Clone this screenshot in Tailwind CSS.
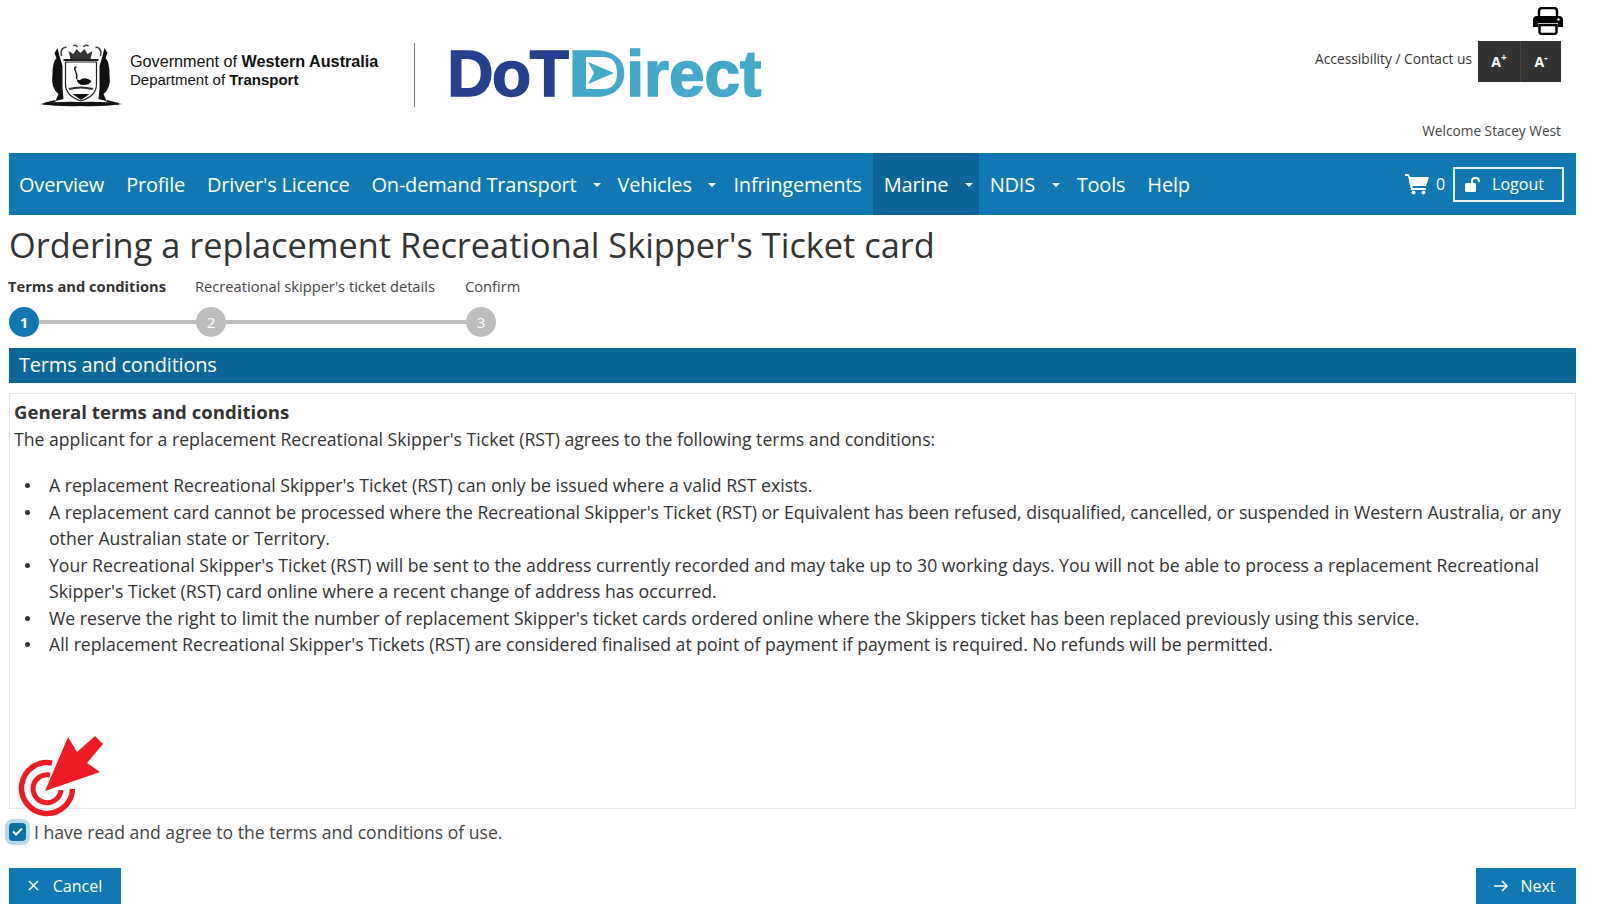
<!DOCTYPE html>
<html lang="en">
<head>
  <meta charset="UTF-8" />
  <meta name="viewport" content="width=device-width, initial-scale=1.0"/>
  <title>DoT Direct - Ordering a replacement card</title>
  <script src="https://cdn.jsdelivr.net/npm/@tailwindcss/browser@4"></script>
</head>
<body class="bg-white font-['Open_Sans',sans-serif] text-[#333] overflow-hidden">
  <div class="relative w-[1585px] h-[921px] px-[9px]">

    <!-- header -->
    <header class="h-[153px] flex justify-between">
      <div class="flex items-start pt-[43px]">
        <!-- WA crest -->
        <svg class="ml-[30px] mt-[1px] w-[84px] h-[63px]" viewBox="0 0 83 63">
          <path d="M0 60 Q20 57 41 58 Q62 57 83 60 Q62 63 41 62 Q20 63 0 60Z" fill="#111"/>
          <path d="M31 15 L29 7 L34 10 L37 5 L41 9 L45 5 L48 10 L53 7 L51 15 Z" fill="#333"/>
          <path d="M27 3 Q20 4 22 12 M56 3 Q63 4 61 12 M34 2 Q36 0 38 3 M44 3 Q46 0 49 2" fill="none" stroke="#444" stroke-width="1.600"/>
          <path d="M26 18 H57 V40 Q57 52 41.500 57 Q26 52 26 40 Z" fill="#fff" stroke="#222" stroke-width="1.200"/>
          <path d="M24 16 H59" stroke="#222" stroke-width="2"/>
          <path d="M37 23 Q34 23 36 27 Q38 31 37 35" fill="none" stroke="#111" stroke-width="1.500"/>
          <path d="M37 35 Q38 41 44 41 Q50 41 52 37 Q47 33 42 35 Q40 37 37 35Z" fill="#111"/>
          <path d="M29 44 Q41 41 54 44 L53 46 Q41 43 30 46 Z" fill="#333"/>
          <path d="M33 50 H50 L41.500 56 Z" fill="#111"/>
          <path d="M15 9 L18 4 L20 12 L23 22 L23 44 L24 55 L16 57 L19 50 Q11 44 13 30 Q13 18 17 14 Z" fill="#111"/>
          <path d="M68 9 L65 4 L63 12 L60 22 L60 44 L59 55 L67 57 L64 50 Q72 44 70 30 Q70 18 66 14 Z" fill="#111"/>
          <path d="M16 57 Q8 59 4 60 M67 57 Q75 59 79 60" stroke="#111" stroke-width="2"/>
        </svg>
        <div class="ml-[7px] mt-[10px] font-['Liberation_Sans',sans-serif] leading-[17.500px] text-[#111]">
          <div class="text-[16.200px]">Government of <b>Western Australia</b></div>
          <div class="text-[15px]">Department of <b>Transport</b></div>
        </div>
        <div class="ml-[36px] w-px h-[64px] bg-[#777]"></div>
        <!-- DoT Direct logo -->
        <div class="ml-[32px] mt-[-1px] flex items-center h-[64px] font-['Liberation_Sans',sans-serif] font-bold text-[64px] leading-none">
          <span class="text-[#24408e] tracking-[-1.500px] [-webkit-text-stroke:1.500px_#24408e]">DoT</span>
          <span class="text-[#44a8cb] ml-[1px] tracking-[0px] [-webkit-text-stroke:1.500px_#44a8cb] flex">
            <span class="relative inline-block w-[58px]">
              <span class="inline-block origin-left scale-x-[1.27]">D</span>
              <svg class="absolute left-[18px] top-[15px] w-[34px] h-[32px]" viewBox="0 0 34 32">
                <path d="M0 0 H17 Q31 0 31 16 Q31 32 17 32 H0 Z" fill="#fff"/>
                <path d="M2 5 L28 16 L2 27 L8 16 Z" fill="#44a8cb"/>
              </svg>
            </span>
            <span>irect</span>
          </span>
        </div>
      </div>
      <div class="flex flex-col items-end pr-[15px]">
        <svg class="mt-[7px] mr-[-2px] w-[30px] h-[28px]" viewBox="0 0 30 28">
          <path d="M6 10 V4 Q6 1 9 1 H21 Q24 1 24 4 V10" fill="none" stroke="#000" stroke-width="2.500"/>
          <path d="M4 9 H26 Q30 9 30 13 V20 H25 V16 H5 V20 H0 V13 Q0 9 4 9Z" fill="#000"/>
          <path d="M6.500 18 H23.500 V25 Q23.500 27 21 27 H9 Q6.500 27 6.500 25 Z" fill="none" stroke="#000" stroke-width="2.500"/>
          <circle cx="25.500" cy="12.500" r="1.300" fill="#fff"/>
        </svg>
        <div class="mt-[6px] flex items-center">
          <span class="text-[13.750px] text-[#333] mr-[6px] mb-[5px]">Accessibility / Contact us</span>
          <div class="flex h-[41px] bg-[#333] text-white font-bold text-[14px]">
            <div class="w-[43px] flex items-center justify-center border-r border-[#444]">A<sup class="text-[10px]">+</sup></div>
            <div class="w-[40px] flex items-center justify-center">A<sup class="text-[10px]">-</sup></div>
          </div>
        </div>
        <div class="mt-[39px] text-[13.700px] text-[#444] leading-[19px]">Welcome Stacey West</div>
      </div>
    </header>

    <!-- main nav -->
    <nav class="h-[62px] bg-[#1079b4] flex items-stretch text-white text-[20px] tracking-[-0.200px]">
      <a class="flex items-center pt-[2px] pl-[10px] pr-[11px]">Overview</a>
      <a class="flex items-center pt-[2px] px-[11px]">Profile</a>
      <a class="flex items-center pt-[2px] px-[11px]">Driver's Licence</a>
      <a class="flex items-center pt-[2px] pl-[11px] w-[254px]">On-demand Transport<span class="ml-auto mr-[13px] w-0 h-0 border-x-[4px] border-x-transparent border-t-[4px] border-t-white"></span></a>
      <a class="flex items-center pt-[2px] pl-[3px] w-[115px]">Vehicles<span class="ml-[16px] w-0 h-0 border-x-[4px] border-x-transparent border-t-[4px] border-t-white"></span></a>
      <a class="flex items-center pt-[2px] pl-[4px] pr-[11px]">Infringements</a>
      <a class="flex items-center pt-[2px] pl-[11px] w-[106px] bg-[#0f659a]">Marine<span class="ml-[17px] w-0 h-0 border-x-[4px] border-x-transparent border-t-[4px] border-t-white"></span></a>
      <a class="flex items-center pt-[2px] pl-[11px] w-[87px]">NDIS<span class="ml-[17px] w-0 h-0 border-x-[4px] border-x-transparent border-t-[4px] border-t-white"></span></a>
      <a class="flex items-center pt-[2px] pl-[11px] pr-[11px]">Tools</a>
      <a class="flex items-center pt-[2px] px-[11px]">Help</a>
      <div class="ml-auto flex items-center pr-[12px]">
        <svg class="w-[24px] h-[22px]" viewBox="0 0 24 22" fill="#fff">
          <path d="M0 1 H4 L5 4 H24 L21 13 H7.500 L8 15 H21 V17 H6 L3 3 H0 Z"/>
          <circle cx="8.500" cy="19.500" r="2"/><circle cx="18.500" cy="19.500" r="2"/>
        </svg>
        <span class="ml-[7px] text-[16px] mb-[1px]">0</span>
        <button class="ml-[8px] w-[111px] h-[35px] border-2 border-white/90 flex items-center justify-center gap-[11px] pr-[8px] text-[16px] tracking-normal">
          <svg class="w-[16px] h-[15px]" viewBox="0 0 16 15" fill="#fff">
            <rect x="0" y="6" width="11" height="9" rx="1.500"/>
            <path d="M7 6 V4 Q7 1 10.500 1 Q14 1 14 4 V5" fill="none" stroke="#fff" stroke-width="2"/>
          </svg>
          Logout
        </button>
      </div>
    </nav>

    <h1 class="mt-[8px] text-[34.300px] leading-[44px] text-[#333]">Ordering a replacement Recreational Skipper's Ticket card</h1>

    <!-- steps -->
    <div class="mt-[9px] ml-[-1px] flex text-[14.700px] leading-[20px] text-[#444]">
      <div class="w-[187px] font-bold text-[#333]">Terms and conditions</div>
      <div class="w-[270px]">Recreational skipper's ticket details</div>
      <div>Confirm</div>
    </div>
    <div class="mt-[11px] flex items-center text-[15px] font-bold text-white">
      <div class="w-[30px] h-[30px] rounded-full bg-[#1079b4] flex items-center justify-center shrink-0">1</div>
      <div class="w-[157px] h-[4px] bg-[#bdbdbd]"></div>
      <div class="w-[30px] h-[30px] rounded-full bg-[#bdbdbd] flex items-center justify-center shrink-0 font-normal">2</div>
      <div class="w-[240px] h-[4px] bg-[#bdbdbd]"></div>
      <div class="w-[30px] h-[30px] rounded-full bg-[#bdbdbd] flex items-center justify-center shrink-0 font-normal">3</div>
    </div>

    <div class="mt-[11px] h-[35px] bg-[#0d6698] text-white text-[20px] leading-[33px] pl-[10px] tracking-[-0.200px]">Terms and conditions</div>

    <!-- terms box -->
    <section class="mt-[10px] h-[416px] border border-[#e3e8ec] pl-[4px] pr-[10px] pt-[5px] text-[17.650px] leading-[26.500px] text-[#333]">
      <h2 class="font-bold text-[18.600px]">General terms and conditions</h2>
      <p>The applicant for a replacement Recreational Skipper's Ticket (RST) agrees to the following terms and conditions:</p>
      <ul class="mt-[20px]">
        <li class="flex"><span class="mt-[11px] ml-[11px] mr-[19px] w-[5px] h-[5px] rounded-full bg-[#333] shrink-0"></span><span>A replacement Recreational Skipper's Ticket (RST) can only be issued where a valid RST exists.</span></li>
        <li class="flex"><span class="mt-[11px] ml-[11px] mr-[19px] w-[5px] h-[5px] rounded-full bg-[#333] shrink-0"></span><span>A replacement card cannot be processed where the Recreational Skipper's Ticket (RST) or Equivalent has been refused, disqualified, cancelled, or suspended in Western Australia, or any other Australian state or Territory.</span></li>
        <li class="flex"><span class="mt-[11px] ml-[11px] mr-[19px] w-[5px] h-[5px] rounded-full bg-[#333] shrink-0"></span><span>Your Recreational Skipper's Ticket (RST) will be sent to the address currently recorded and may take up to 30 working days. You will not be able to process a replacement Recreational Skipper's Ticket (RST) card online where a recent change of address has occurred.</span></li>
        <li class="flex"><span class="mt-[11px] ml-[11px] mr-[19px] w-[5px] h-[5px] rounded-full bg-[#333] shrink-0"></span><span>We reserve the right to limit the number of replacement Skipper's ticket cards ordered online where the Skippers ticket has been replaced previously using this service.</span></li>
        <li class="flex"><span class="mt-[11px] ml-[11px] mr-[19px] w-[5px] h-[5px] rounded-full bg-[#333] shrink-0"></span><span>All replacement Recreational Skipper's Tickets (RST) are considered finalised at point of payment if payment is required. No refunds will be permitted.</span></li>
      </ul>
    </section>

    <!-- agree checkbox -->
    <label class="mt-[10px] flex items-center h-[26px] text-[17.600px] text-[#444]">
      <span class="w-[17px] h-[18px] mb-[1px] rounded-[4px] bg-[#0d6fa8] ring-[4px] ring-[#b9d9ea] flex items-center justify-center">
        <svg class="w-[11px] h-[9px]" viewBox="0 0 11 9"><path d="M1 4.500 L4 7.500 L10 1.500" fill="none" stroke="#fff" stroke-width="2"/></svg>
      </span>
      <span class="ml-[8px]">I have read and agree to the terms and conditions of use.</span>
    </label>

    <!-- buttons -->
    <div class="mt-[23px] flex justify-between text-white text-[16px]">
      <button class="w-[112px] h-[36px] bg-[#1079b4] flex items-center justify-center gap-[14px] pb-[1px]">
        <svg class="w-[11px] h-[11px]" viewBox="0 0 11 11"><path d="M1 1 L10 10 M10 1 L1 10" stroke="#fff" stroke-width="1.600"/></svg>
        Cancel
      </button>
      <button class="w-[100px] h-[36px] bg-[#1079b4] flex items-center justify-center gap-[12px] pr-[2px] pb-[1px]">
        <svg class="w-[14px] h-[12px]" viewBox="0 0 14 12"><path d="M0 6 H13 M8 1 L13 6 L8 11" fill="none" stroke="#fff" stroke-width="1.600"/></svg>
        Next
      </button>
    </div>

    <!-- red target annotation -->
    <svg class="absolute left-0 top-[720px] w-[120px] h-[120px]" viewBox="0 0 120 120">
      <path d="M52 43 A25.500 25.500 0 1 0 72.500 69" fill="none" stroke="#ed1c24" stroke-width="5.500"/>
      <path d="M50 55 A14 14 0 1 0 61 70" fill="none" stroke="#ed1c24" stroke-width="5"/>
      <path d="M45 71 L68 17 L77 32 L95 16 L103 24 L87 43 L100 52 Z" fill="#ed1c24"/>
    </svg>
  </div>
</body>
</html>
